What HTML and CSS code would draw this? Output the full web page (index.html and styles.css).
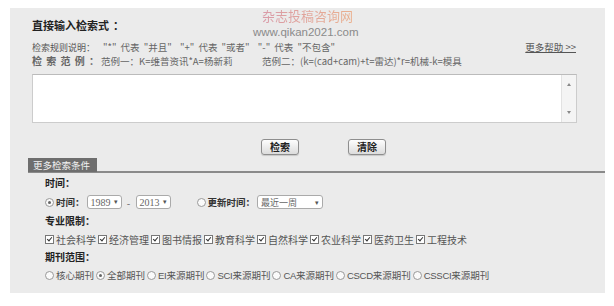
FILE: index.html
```html
<!DOCTYPE html>
<html lang="zh">
<head>
<meta charset="utf-8">
<title>直接输入检索式</title>
<link rel="stylesheet" href="styles.css">
</head>
<body>
<div class="panel">
  <div class="wm">
    <div class="wm-cn">杂志投稿咨询网</div>
    <div class="wm-en">www.qikan2021.com</div>
  </div>
  <div class="head">
    <div class="title">直接输入检索式<span class="colon">：</span></div>
    <div class="rules">
      <div class="rules-left"><span class="lbl">检索规则说明：</span><span class="rtext">"*" 代表 "并且" &nbsp;"+" 代表 "或者" &nbsp;"-" 代表 "不包含"</span></div>
      <a class="help">更多帮助 &gt;&gt;</a>
    </div>
    <div class="examples">
      <span class="lbl spaced">检 索 范 例 ：</span>
      <span class="ex1">范例一：K=维普资讯*A=杨新莉</span>
      <span class="ex2">范例二：(k=(cad+cam)+t=雷达)*r=机械-k=模具</span>
    </div>
    <div class="tarea">
      <div class="tarea-body"></div>
      <div class="tarea-scroll"><span class="arr up"></span><span class="arr down"></span></div>
    </div>
    <div class="btns">
      <span class="btn">检索</span>
      <span class="btn">清除</span>
    </div>
  </div>
  <div class="tabbar"><span class="tab">更多检索条件</span></div>
  <div class="opts">
    <div class="sec">时间：</div>
    <div class="row time">
      <span class="radio on"></span><span class="rlabel">时间：</span>
      <span class="sel s1">1989<i>▾</i></span>
      <span class="dash">-</span>
      <span class="sel s2">2013<i>▾</i></span>
      <span class="radio r2"></span><span class="rlabel">更新时间：</span>
      <span class="sel s3">最近一周<i>▾</i></span>
    </div>
    <div class="sec">专业限制：</div>
    <div class="row checks">
      <span class="item"><span class="cb"></span>社会科学</span>
      <span class="item"><span class="cb"></span>经济管理</span>
      <span class="item"><span class="cb"></span>图书情报</span>
      <span class="item"><span class="cb"></span>教育科学</span>
      <span class="item"><span class="cb"></span>自然科学</span>
      <span class="item"><span class="cb"></span>农业科学</span>
      <span class="item"><span class="cb"></span>医药卫生</span>
      <span class="item"><span class="cb"></span>工程技术</span>
    </div>
    <div class="sec">期刊范围：</div>
    <div class="row radios">
      <span class="item"><span class="radio"></span>核心期刊</span>
      <span class="item"><span class="radio on"></span>全部期刊</span>
      <span class="item"><span class="radio"></span><b>EI</b>来源期刊</span>
      <span class="item"><span class="radio"></span><b>SCI</b>来源期刊</span>
      <span class="item"><span class="radio"></span><b>CA</b>来源期刊</span>
      <span class="item"><span class="radio"></span><b>CSCD</b>来源期刊</span>
      <span class="item"><span class="radio"></span><b>CSSCI</b>来源期刊</span>
    </div>
  </div>
</div>
</body>
</html>
```

FILE: styles.css
```css
* { box-sizing: border-box; }
html, body { margin: 0; padding: 0; background: #fff; }
body {
  font-family: "Noto Sans CJK SC", "Liberation Sans", sans-serif;
  font-size: 10px;
  color: #555;
  width: 614px;
  height: 306px;
  overflow: hidden;
}
.panel {
  position: relative;
  margin: 8px 0 0 10px;
  width: 595px;
  height: 285px;
  background: #ebebeb;
}
.wm { position: absolute; left: 0; top: 0; width: 100%; pointer-events: none; }
.wm-cn {
  position: absolute; left: 252px; top: -1px;
  font-size: 13px; line-height: 17px;
  color: #e7a0a0;
  background: linear-gradient(90deg, #d99aa8, #eab08e);
  -webkit-background-clip: text; background-clip: text;
  -webkit-text-fill-color: transparent;
}
.wm-en {
  position: absolute; left: 243px; top: 18px;
  font-family: "Liberation Sans", sans-serif;
  font-size: 11.5px; line-height: 13px; color: #8a8a8a;
}
.head { padding: 11px 28px 0 22px; }
.title {
  height: 12px; line-height: 12px;
  font-size: 11px; font-weight: bold; color: #222;
}
.colon { margin-left: 4px; }
.rules {
  margin-top: 10px; height: 12px; line-height: 12px;
  display: flex; justify-content: space-between;
}
.lbl { color: #555; }
.rules .lbl { font-size: 9px; margin-right: 8px; }
.rtext { font-size: 9.5px; color: #666; word-spacing: 2px; }
.help { color: #555; text-decoration: underline; font-size: 9.5px; margin-right: 1px; }
.examples {
  margin-top: 2px; height: 12px; line-height: 12px;
  display: flex; font-size: 9.5px; color: #666;
}
.spaced { width: 69px; letter-spacing: 1px; font-weight: bold; color: #666; font-size: 10px; }
.ex1 { width: 161px; }
.tarea {
  margin-top: 7px; height: 49px;
  display: flex;
  border: 1px solid #ccc; border-top-color: #bbb;
  background: #fff;
}
.tarea-body { flex: 1; }
.tarea-scroll {
  width: 15px; border-left: 1px solid #e2e2e2; background: #f4f4f4;
  display: flex; flex-direction: column; justify-content: space-between; align-items: center;
  padding: 8px 0 8px;
}
.arr { width: 0; height: 0; border-left: 2.5px solid transparent; border-right: 2.5px solid transparent; }
.arr.up { border-bottom: 3px solid #888; }
.arr.down { border-top: 3px solid #888; }
.btns { margin-top: 16px; height: 16px; display: flex; padding-left: 229px; gap: 49px; }
.btn {
  width: 38px; height: 16px; line-height: 14px; text-align: center;
  border: 1px solid #8e8e8e; border-radius: 3px;
  background: linear-gradient(#fdfdfd, #dcdcdc);
  font-size: 10px; color: #222; font-weight: bold;
  box-shadow: 0 1px 1px rgba(0,0,0,0.15);
}
.tabbar {
  margin: 2px 0 0 18px; height: 16px;
  border-bottom: 2px solid #8a8a8a;
}
.tab {
  display: inline-block; height: 14px; line-height: 14px;
  padding: 0 5px; width: 69px;
  background: #6e6e6e; color: #f2f2f2; font-size: 9.5px;
}
.opts { padding: 4px 0 0 35px; }
.sec { height: 12px; line-height: 12px; font-weight: bold; color: #222; font-size: 10px; }
.row { display: flex; align-items: center; height: 14px; margin: 6px 0; color: #555; font-size: 10px; }
.checks { height: 12px; }
.radios { height: 12px; margin-top: 6px; font-size: 9.5px; }
.radios b { font-weight: normal; font-family: "Liberation Sans", sans-serif; letter-spacing: -0.3px; font-size: 9.5px; }
.radio {
  display: inline-block; width: 9px; height: 9px; border-radius: 50%;
  border: 1px solid #999; background: #fafafa; margin-right: 2px; position: relative; flex: none;
}
.radio.on::after {
  content: ""; position: absolute; left: 2px; top: 2px; width: 3px; height: 3px;
  border-radius: 50%; background: #666;
}
.rlabel { margin-right: 2px; color: #333; font-weight: bold; font-size: 9.5px; }
.sel {
  display: inline-flex; align-items: center; justify-content: space-between;
  height: 14px; padding: 0 3px 0 3px;
  border: 1px solid #aaa; border-radius: 3px; background: #fff;
  font-family: "Liberation Serif", "Noto Sans CJK SC", serif; color: #666; font-size: 10px;
}
.sel i { font-style: normal; font-size: 7px; color: #555; }
.s1, .s2 { width: 35px; }
.s3 { width: 66px; font-family: "Noto Sans CJK SC", sans-serif; font-size: 9px; }
.dash { width: 14px; text-align: center; color: #666; }
.r2 { margin-left: 26px; }
.item { display: inline-flex; align-items: center; margin-right: 2px; white-space: nowrap; }
.cb {
  width: 9px; height: 9px; border: 1px solid #777; background: #fff; margin-right: 2px;
  position: relative; flex: none;
}
.cb::after {
  content: ""; position: absolute; left: 2px; top: 0px; width: 2px; height: 4px;
  border: solid #333; border-width: 0 1.2px 1.2px 0; transform: rotate(40deg);
}
.radios .item { margin-right: 2px; }
```
